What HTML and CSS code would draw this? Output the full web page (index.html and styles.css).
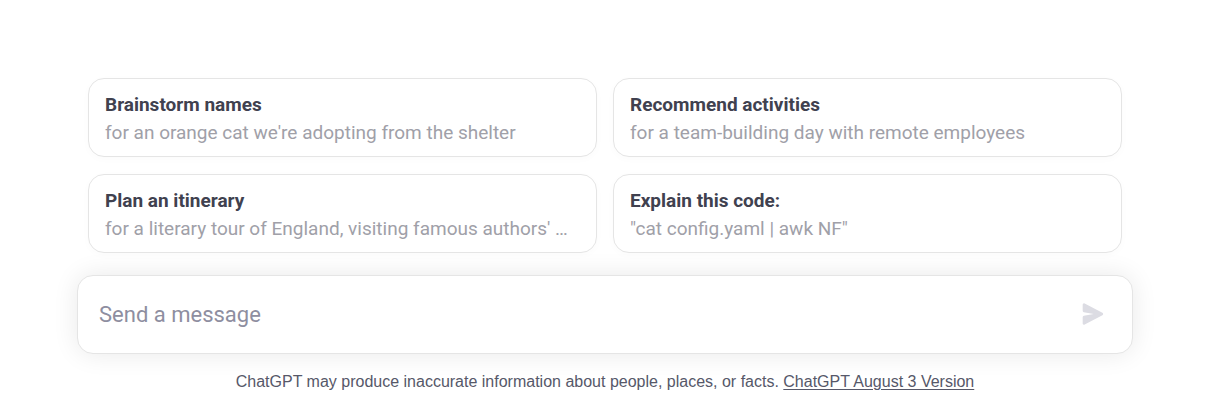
FILE: index.html
```html
<!DOCTYPE html>
<html lang="en">
<head>
    <meta charset="UTF-8">
    <meta name="viewport" content="width=device-width, initial-scale=1.0">
    <title>ChatGPT</title>
    <link rel="stylesheet" href="styles.css">
</head>
<body>
    <main class="container">
        <div class="suggestions">
            <button type="button" class="card">
                <span class="card-title">Brainstorm names</span>
                <span class="card-text">for an orange cat we're adopting from the shelter</span>
            </button>
            <button type="button" class="card">
                <span class="card-title">Recommend activities</span>
                <span class="card-text">for a team-building day with remote employees</span>
            </button>
            <button type="button" class="card">
                <span class="card-title">Plan an itinerary</span>
                <span class="card-text">for a literary tour of England, visiting famous authors' …</span>
            </button>
            <button type="button" class="card">
                <span class="card-title">Explain this code:</span>
                <span class="card-text">"cat config.yaml | awk NF"</span>
            </button>
        </div>

        <form class="composer">
            <input type="text" class="message" placeholder="Send a message" aria-label="Send a message">
            <button type="submit" class="send" aria-label="Send" disabled>
                <svg viewBox="0 0 16 16" width="22" height="22" fill="currentColor" aria-hidden="true">
                    <path d="M.5 1.163A1 1 0 0 1 1.97.28l12.868 6.837a1 1 0 0 1 0 1.766L1.969 15.72A1 1 0 0 1 .5 14.836V10.33a1 1 0 0 1 .816-.983L8.5 8 1.316 6.653A1 1 0 0 1 .5 5.67V1.163Z"/>
                </svg>
            </button>
        </form>

        <footer>
            ChatGPT may produce inaccurate information about people, places, or facts.
            <a href="#">ChatGPT August 3 Version</a>
        </footer>
    </main>
</body>
</html>
```
FILE: styles.css
```css
:root {
    --title-color: #40414f;
    --muted-color: #a0a0a8;
    --placeholder-color: #8e8ea0;
    --footer-color: #565869;
    --border-color: #e5e5e5;
}
* {
    box-sizing: border-box;
}
body {
    margin: 0;
    font-family: Roboto, "Liberation Sans", sans-serif;
    color: var(--title-color);
    background: white;
}
.container {
    padding: 78px 74px 0 77px;
}
.suggestions {
    display: grid;
    grid-template-columns: 1fr 1fr;
    gap: 17px 16px;
    padding: 0 11px;
    margin-bottom: 22px;
}
.card {
    min-width: 0;
    padding: 12px 16px 9px;
    font-family: inherit;
    font-size: 19px;
    line-height: 28px;
    color: inherit;
    text-align: left;
    background: white;
    border: 1px solid var(--border-color);
    border-radius: 16px;
    box-shadow: 0 2px 8px rgba(0,0,0,0.02);
    cursor: pointer;
}
.card-title,
.card-text {
    display: block;
    overflow: hidden;
    text-overflow: ellipsis;
    white-space: nowrap;
}
.card-title {
    font-weight: bold;
}
.card-text {
    color: var(--muted-color);
}
.composer {
    display: flex;
    align-items: center;
    padding: 21px 28px 22px 21px;
    background: white;
    border: 1px solid var(--border-color);
    border-radius: 16px;
    box-shadow: 0 0 26px rgba(0,0,0,0.09);
}
.message {
    flex: 1;
    min-width: 0;
    height: 34px;
    padding: 0;
    font-family: inherit;
    font-size: 22px;
    color: inherit;
    background: none;
    border: none;
    outline: none;
}
.message::placeholder {
    color: var(--placeholder-color);
    opacity: 1;
}
.send {
    display: flex;
    padding: 0;
    color: #dcdce3;
    background: none;
    border: none;
}
footer {
    padding-top: 17px;
    font-family: "Liberation Sans", Arial, sans-serif;
    font-size: 16px;
    line-height: 22px;
    text-align: center;
    color: var(--footer-color);
}
footer a {
    color: inherit;
    text-underline-offset: 2px;
}
@media (max-width: 600px) {
    .container {
        padding: 16px;
    }
    .suggestions {
        grid-template-columns: 1fr;
        padding: 0;
    }
}
```
